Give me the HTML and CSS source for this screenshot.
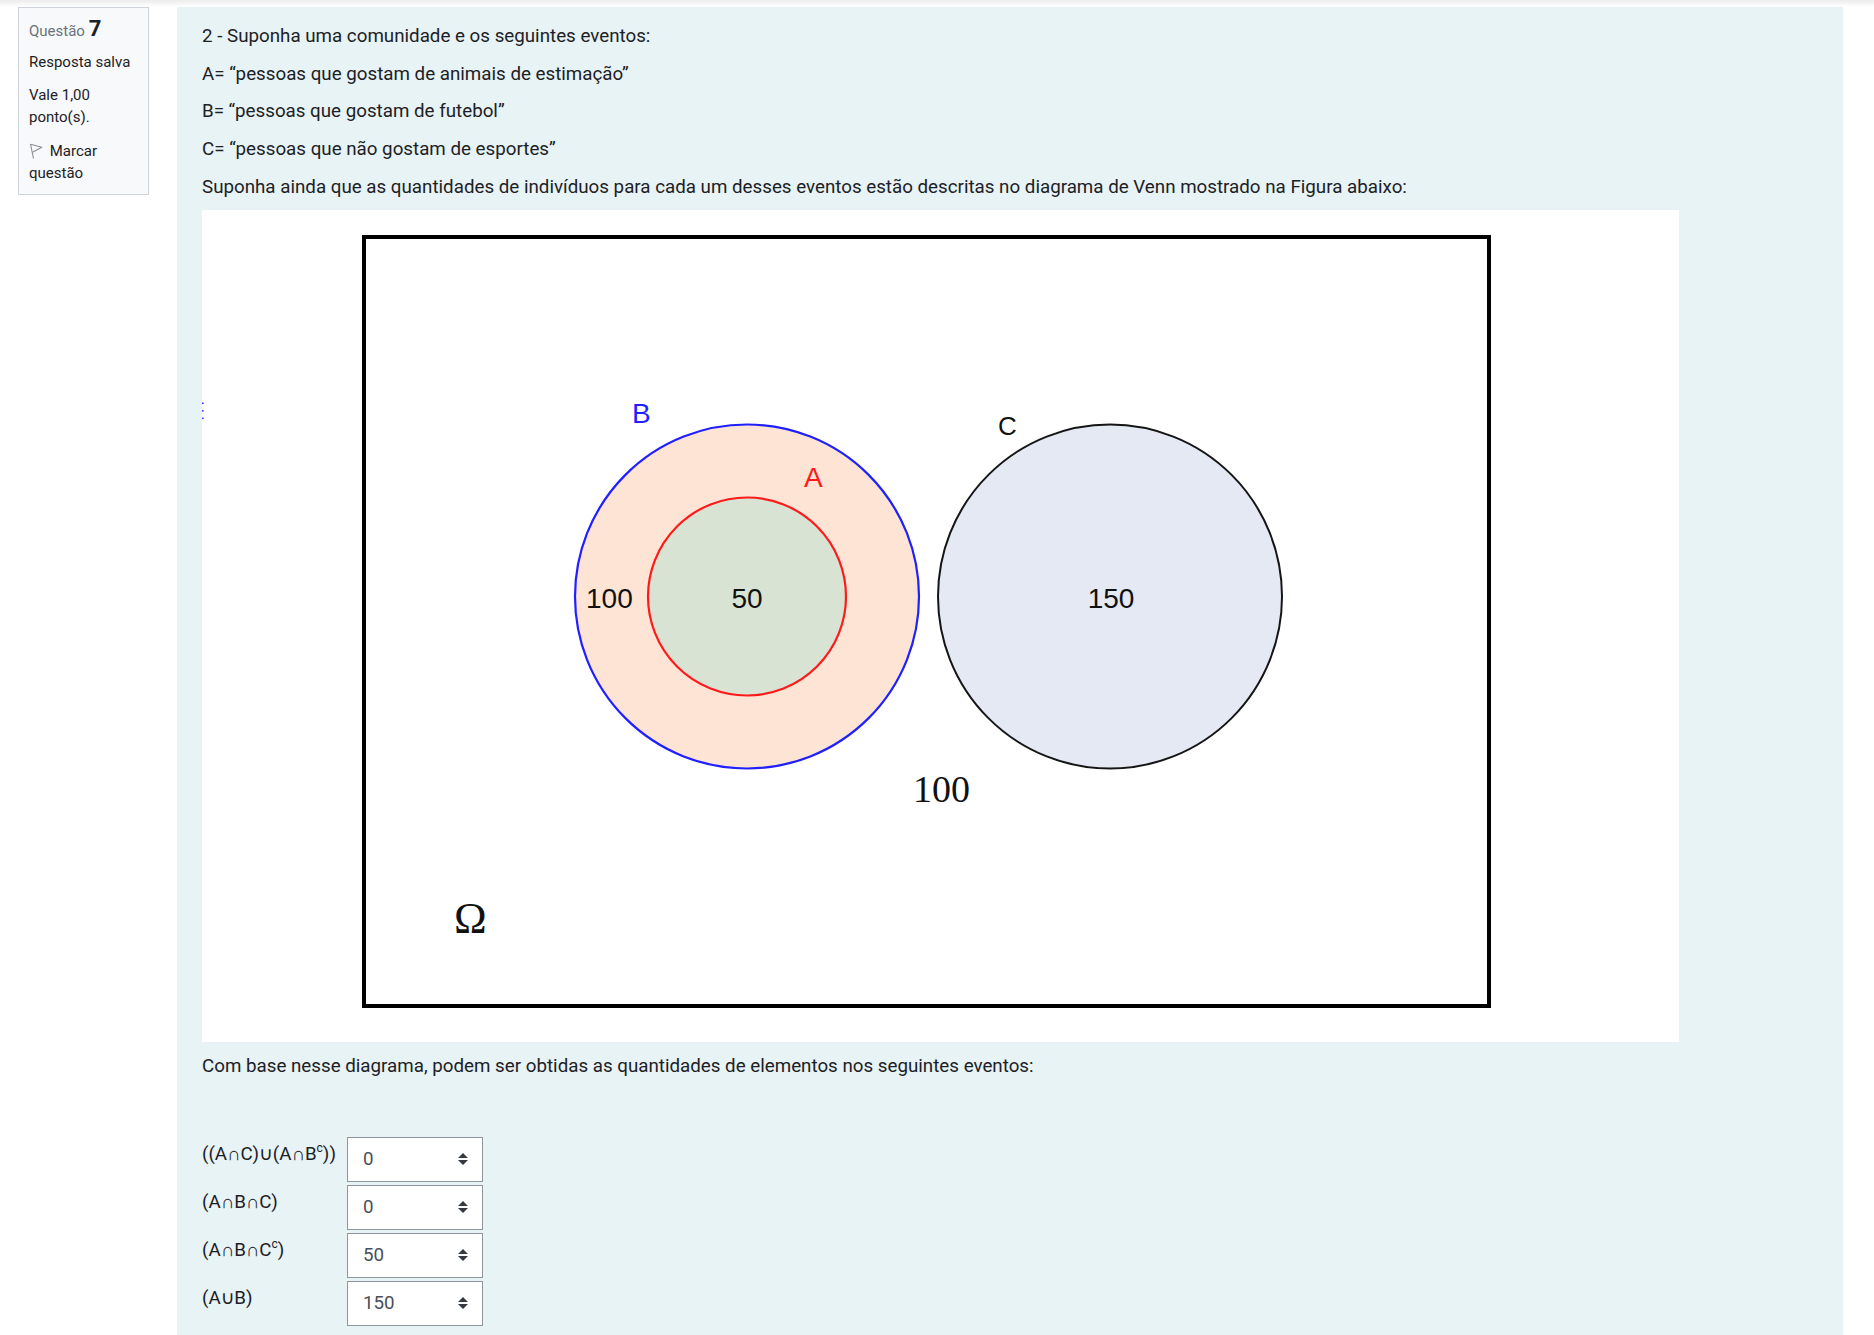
FILE: index.html
```html
<!DOCTYPE html>
<html lang="pt-BR">
<head>
<meta charset="utf-8">
<title>Questão 7</title>
<link rel="stylesheet" href="styles.css">
</head>
<body>
<div class="topshade"></div>
<div class="page">
  <aside class="info">
    <h3 class="qno"><span class="qlabel">Questão</span> <span class="qnum">7</span></h3>
    <p class="state">Resposta salva</p>
    <p class="grade">Vale 1,00 ponto(s).</p>
    <p class="flag"><svg class="flag-icon" width="14" height="16" viewBox="0 0 14 16"><path d="M1.5 1 L4.5 15.5" fill="none" stroke="#8a8f94" stroke-width="1.1"/><path d="M1.7 1.3 L12.8 4.2 L3.6 9.2" fill="none" stroke="#8a8f94" stroke-width="1.1" stroke-linejoin="round"/></svg> Marcar questão</p>
  </aside>
  <main class="formulation">
    <p>2 - Suponha uma comunidade e os seguintes eventos:</p>
    <p>A= “pessoas que gostam de animais de estimação”</p>
    <p>B= “pessoas que gostam de futebol”</p>
    <p>C= “pessoas que não gostam de esportes”</p>
    <p>Suponha ainda que as quantidades de indivíduos para cada um desses eventos estão descritas no diagrama de Venn mostrado na Figura abaixo:</p>
    <p class="figure">
      <svg class="venn" width="1477" height="832" viewBox="0 0 1477 832">
        <rect x="0" y="0" width="1477" height="832" fill="#ffffff"/>
        <rect x="162" y="27" width="1125" height="769" fill="none" stroke="#000" stroke-width="4"/>
        <circle cx="545" cy="386.5" r="172" fill="#fde4d5" stroke="#1f1fff" stroke-width="2.2"/>
        <circle cx="545" cy="386.5" r="99" fill="#d9e3d3" stroke="#ff1a1a" stroke-width="2.2"/>
        <circle cx="908" cy="386.5" r="172" fill="#e4e9f4" stroke="#151515" stroke-width="2"/>
        <text class="vl vblue" x="430" y="213">B</text>
        <text class="vl vred" x="602" y="277">A</text>
        <text class="vl vc" x="796" y="225">C</text>
        <text class="vl" x="384" y="398">100</text>
        <text class="vl" x="545" y="398" text-anchor="middle">50</text>
        <text class="vl" x="909" y="398" text-anchor="middle">150</text>
        <text class="vs" x="711" y="592">100</text>
        <text class="vo" x="252" y="723">Ω</text>
        <rect x="0" y="192.5" width="1.6" height="1.6" fill="#3b3bff"/>
        <rect x="0" y="200" width="1.6" height="1.6" fill="#3b3bff"/>
        <rect x="0" y="207.5" width="1.6" height="1.6" fill="#3b3bff"/>
      </svg>
    </p>
    <p>Com base nesse diagrama, podem ser obtidas as quantidades de elementos nos seguintes eventos:</p>
    <p>&nbsp;</p>
    <div class="answers">
      <div class="lbl">((A∩C)∪(A∩B<sup>c</sup>))</div>
      <div class="sel"><span>0</span><svg class="arrows" width="10" height="12" viewBox="0 0 10 12"><path d="M0 5 L5 0 L10 5 Z M0 7 L5 12 L10 7 Z" fill="#343a40"/></svg></div>
      <div class="lbl">(A∩B∩C)</div>
      <div class="sel"><span>0</span><svg class="arrows" width="10" height="12" viewBox="0 0 10 12"><path d="M0 5 L5 0 L10 5 Z M0 7 L5 12 L10 7 Z" fill="#343a40"/></svg></div>
      <div class="lbl">(A∩B∩C<sup>c</sup>)</div>
      <div class="sel"><span>50</span><svg class="arrows" width="10" height="12" viewBox="0 0 10 12"><path d="M0 5 L5 0 L10 5 Z M0 7 L5 12 L10 7 Z" fill="#343a40"/></svg></div>
      <div class="lbl">(A∪B)</div>
      <div class="sel"><span>150</span><svg class="arrows" width="10" height="12" viewBox="0 0 10 12"><path d="M0 5 L5 0 L10 5 Z M0 7 L5 12 L10 7 Z" fill="#343a40"/></svg></div>
    </div>
  </main>
</div>
</body>
</html>
```
FILE: styles.css
```css
html, body {
  margin: 0;
  padding: 0;
  background: #ffffff;
}

body {
  font-family: Roboto, "Liberation Sans", "DejaVu Sans", sans-serif;
  color: #1d2125;
}

.topshade {
  height: 7px;
  background: linear-gradient(to bottom, #ececec, #ffffff);
}

.page {
  display: flex;
  align-items: flex-start;
  gap: 28px;
  padding: 0 31px 0 18px;
}

/* Left info box */
.info {
  box-sizing: border-box;
  width: 131px;
  flex: none;
  background: #f8f9fa;
  border: 1px solid #cfd4da;
  padding: 8px 10px 10px 10px;
  font-size: 15px;
  line-height: 22px;
}

.qno {
  margin: 0 0 7px;
  font-size: 15px;
  line-height: 26px;
  font-weight: normal;
}

.qlabel {
  color: #6a737b;
}

.qnum {
  font-size: 22px;
  font-weight: 700;
  color: #1d2125;
}

.info p {
  margin: 0 0 11px;
}

.info .grade {
  margin-bottom: 12px;
}

.info .flag {
  margin-bottom: 0;
}

.flag-icon {
  vertical-align: -3px;
  margin-right: 3px;
}

/* Question body */
.formulation {
  flex: 1;
  min-width: 0;
  background: #e7f3f5;
  padding: 15px 25px 40px;
  font-size: 18.75px;
  line-height: 28.1px;
}

.formulation p {
  margin: 0 0 9.6px;
}

.formulation .figure {
  line-height: 0;
}

.venn {
  display: block;
}

.vl {
  font-family: "Liberation Sans", Arial, sans-serif;
  font-size: 28px;
  fill: #111111;
}

.vblue {
  fill: #1f1fff;
}

.vred {
  fill: #ff1a1a;
}

.vc {
  font-size: 26px;
}

.vs {
  font-family: "Liberation Serif", "Times New Roman", serif;
  font-size: 38px;
  fill: #111111;
}

.vo {
  font-family: "Liberation Serif", "Times New Roman", serif;
  font-size: 44px;
  fill: #111111;
}

/* Answers */
.answers {
  display: grid;
  grid-template-columns: 138px 136px;
  column-gap: 7px;
  row-gap: 3px;
  margin-top: 19px;
}

.lbl {
  padding-top: 3px;
  line-height: 28px;
  white-space: nowrap;
  font-family: Roboto, "Liberation Sans", "DejaVu Sans", sans-serif;
}

.lbl sup {
  font-size: 12px;
  line-height: 0;
  vertical-align: 8px;
}

.sel {
  box-sizing: border-box;
  height: 45px;
  border: 1px solid #8f959e;
  background: #ffffff;
  display: flex;
  align-items: center;
  justify-content: space-between;
  padding: 0 14px 0 15px;
  color: #495057;
  font-size: 18.75px;
}

.arrows {
  display: block;
}
```
